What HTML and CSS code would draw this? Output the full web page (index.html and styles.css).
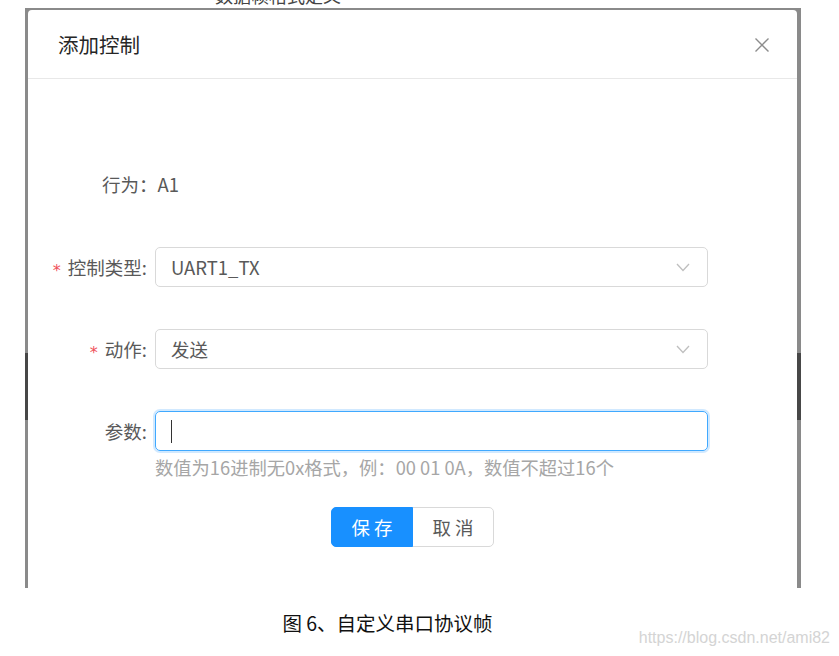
FILE: index.html
```html
<!DOCTYPE html>
<html lang="zh-CN">
<head>
<meta charset="utf-8">
<title>添加控制</title>
<link rel="stylesheet" href="styles.css">
</head>
<body>
<div class="page">
  <div class="behind"><span>数据帧格式定义</span></div>
  <div class="overlay">
    <div class="modal">
      <div class="modal-header">
        <div class="modal-title">添加控制</div>
        <svg class="close" width="16" height="16" viewBox="0 0 16 16"><path d="M1.5 1.5 L14.5 14.5 M14.5 1.5 L1.5 14.5" stroke="#8c8c8c" stroke-width="1.4" fill="none"/></svg>
      </div>
      <div class="modal-body">
        <div class="behavior">行为：A1</div>
        <div class="form-item">
          <div class="label"><span class="req">*</span>控制类型:</div>
          <div class="control">
            <div class="select">
              <span>UART1_TX</span>
              <svg class="arrow" width="14" height="9" viewBox="0 0 14 9"><path d="M1 1 L7 7.5 L13 1" stroke="#bfbfbf" stroke-width="1.3" fill="none"/></svg>
            </div>
          </div>
        </div>
        <div class="form-item">
          <div class="label"><span class="req">*</span>动作:</div>
          <div class="control">
            <div class="select">
              <span>发送</span>
              <svg class="arrow" width="14" height="9" viewBox="0 0 14 9"><path d="M1 1 L7 7.5 L13 1" stroke="#bfbfbf" stroke-width="1.3" fill="none"/></svg>
            </div>
          </div>
        </div>
        <div class="form-item last">
          <div class="label">参数:</div>
          <div class="control">
            <div class="input focused"><span class="caret"></span></div>
            <div class="help">数值为16进制无0x格式，例：00 01 0A，数值不超过16个</div>
          </div>
        </div>
        <div class="actions">
          <button class="btn primary">保 存</button>
          <button class="btn">取 消</button>
        </div>
      </div>
    </div>
  </div>
  <div class="caption">图 6、自定义串口协议帧</div>
  <div class="watermark">https://blog.csdn.net/ami82</div>
</div>
</body>
</html>
```
FILE: styles.css
```css
* { box-sizing: border-box; }
html, body {
  margin: 0;
  padding: 0;
  background: #ffffff;
}
body {
  font-family: "Noto Sans CJK SC", "Noto Sans", sans-serif;
  color: #595959;
}
.page {
  position: relative;
  width: 839px;
  height: 656px;
  overflow: hidden;
}
.behind {
  position: absolute;
  top: 0;
  left: 215px;
  height: 8px;
  overflow: hidden;
  font-size: 18px;
  color: #444;
}
.behind span {
  display: block;
  margin-top: -17px;
  line-height: 24px;
}
.overlay {
  margin: 8px 0 0 25px;
  width: 776px;
  height: 580px;
  padding: 2px 4px 0 3px;
  background: linear-gradient(#8a8a8a 0 345px, #474747 345px 412px, #8a8a8a 412px);
  overflow: hidden;
}
.modal {
  background: #ffffff;
  border-radius: 4px 4px 0 0;
  height: 600px;
}
.modal-header {
  height: 69px;
  padding: 0 30px;
  border-bottom: 1px solid #e8e8e8;
  display: flex;
  align-items: center;
  justify-content: space-between;
}
.modal-title {
  font-size: 20.5px;
  color: #262626;
  line-height: 28px;
  margin-top: -1px;
}
.close {
  margin-right: -3px;
  margin-top: 1px;
}
.modal-body {
  padding-top: 85px;
}
.behavior {
  height: 40px;
  line-height: 40px;
  padding-left: 74px;
  font-size: 18.5px;
  color: #595959;
  margin-bottom: 43px;
}
.form-item {
  display: grid;
  grid-template-columns: 127px 553px;
  margin-bottom: 42px;
}
.form-item.last {
  margin-bottom: 0;
}
.label {
  height: 40px;
  line-height: 40px;
  text-align: right;
  padding-right: 8px;
  font-size: 18.5px;
  color: #595959;
  white-space: nowrap;
}
.req {
  color: #f0505a;
  font-family: "DejaVu Sans", sans-serif;
  font-size: 16px;
  margin-right: 7px;
  vertical-align: -1px;
}
.control {
  font-size: 18.5px;
}
.select, .input {
  height: 40px;
  border: 1px solid #d9d9d9;
  border-radius: 5px;
  display: flex;
  align-items: center;
  justify-content: space-between;
  padding: 0 16px 0 15px;
  color: #595959;
}
.arrow {
  margin-right: 1px;
}
.input.focused {
  border-color: #40a9ff;
  box-shadow: 0 0 0 2px rgba(24, 144, 255, 0.2);
  justify-content: flex-start;
}
.caret {
  display: block;
  width: 1px;
  height: 23px;
  background: #333;
}
.help {
  margin-top: 5px;
  line-height: 22px;
  font-size: 18.3px;
  color: #a6a6a6;
  white-space: nowrap;
}
.actions {
  display: flex;
  justify-content: center;
  margin-top: 29px;
}
.btn {
  width: 82px;
  height: 40px;
  font-family: "Noto Sans CJK SC", sans-serif;
  font-size: 18.5px;
  border: 1px solid #d9d9d9;
  background: #ffffff;
  color: #595959;
  border-radius: 0 5px 5px 0;
  padding: 0;
  margin-left: -1px;
}
.btn.primary {
  background: #1890ff;
  border-color: #1890ff;
  color: #ffffff;
  border-radius: 5px 0 0 5px;
  margin-left: 0;
  position: relative;
  z-index: 1;
}
.caption {
  text-align: center;
  margin-top: 22px;
  padding-right: 64px;
  font-size: 19.5px;
  font-weight: 400;
  line-height: 26px;
  color: #111111;
}
.watermark {
  position: absolute;
  right: 9px;
  bottom: 9px;
  font-family: "Liberation Sans", sans-serif;
  font-size: 16px;
  color: #d4d4d4;
}
```
